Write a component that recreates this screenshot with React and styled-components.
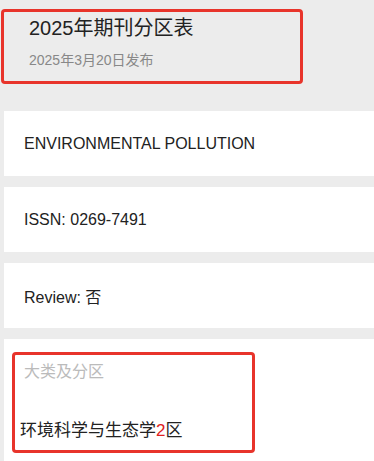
import React from 'react'
import styled, {createGlobalStyle} from 'styled-components'

const Global = createGlobalStyle`
  html, body {
    margin: 0;
    padding: 0;
    background: #ececec;
    font-family: "Liberation Sans", Arial, "Noto Sans CJK SC", sans-serif;
  }
`

const Page = styled.div`
  width: 374px;
  min-height: 461px;
  overflow: hidden;
`

const Header = styled.div`
  box-sizing: border-box;
  width: 302px;
  height: 75px;
  margin: 9px 0 0 1px;
  padding: 4px 0 0 25px;
  border: 3px solid #e8342b;
  border-radius: 4px;
`

const Title = styled.h1`
  margin: 0;
  font-size: 20px;
  line-height: 24px;
  font-weight: normal;
  color: #222;
`

const Subtitle = styled.div`
  margin-top: 12px;
  font-size: 14px;
  line-height: 16px;
  color: #888;
`

const List = styled.div`
  display: flex;
  flex-direction: column;
  gap: 11px;
  margin: 27px 0 0 4px;
`

const Card = styled.div`
  display: flex;
  align-items: center;
  height: 65px;
  padding-left: 20px;
  background: #fff;
  font-size: 16px;
  color: #222;
`

const CategoryCard = styled.div`
  background: #fff;
  padding: 13px 0 20px 8px;
`

const Highlight = styled.div`
  box-sizing: border-box;
  width: 243px;
  height: 101px;
  padding: 7px 0 0 9px;
  border: 3px solid #e8342b;
  border-radius: 4px;
`

const Label = styled.div`
  font-size: 16px;
  line-height: 20px;
  color: #bbb;
`

const Value = styled.div`
  margin: 39px 0 0 -4px;
  font-size: 17px;
  line-height: 20px;
  color: #222;

  em {
    font-style: normal;
    color: #e02020;
  }
`

const App = () => {
    const rows = ['ENVIRONMENTAL POLLUTION', 'ISSN: 0269-7491', 'Review: 否']
    return (
        <Page>
            <Global/>
            <Header>
                <Title>2025年期刊分区表</Title>
                <Subtitle>2025年3月20日发布</Subtitle>
            </Header>
            <List>
                {rows.map((r) => <Card key={r}>{r}</Card>)}
                <CategoryCard>
                    <Highlight>
                        <Label>大类及分区</Label>
                        <Value>环境科学与生态学<em>2</em>区</Value>
                    </Highlight>
                </CategoryCard>
            </List>
        </Page>
    )
}

export default App
